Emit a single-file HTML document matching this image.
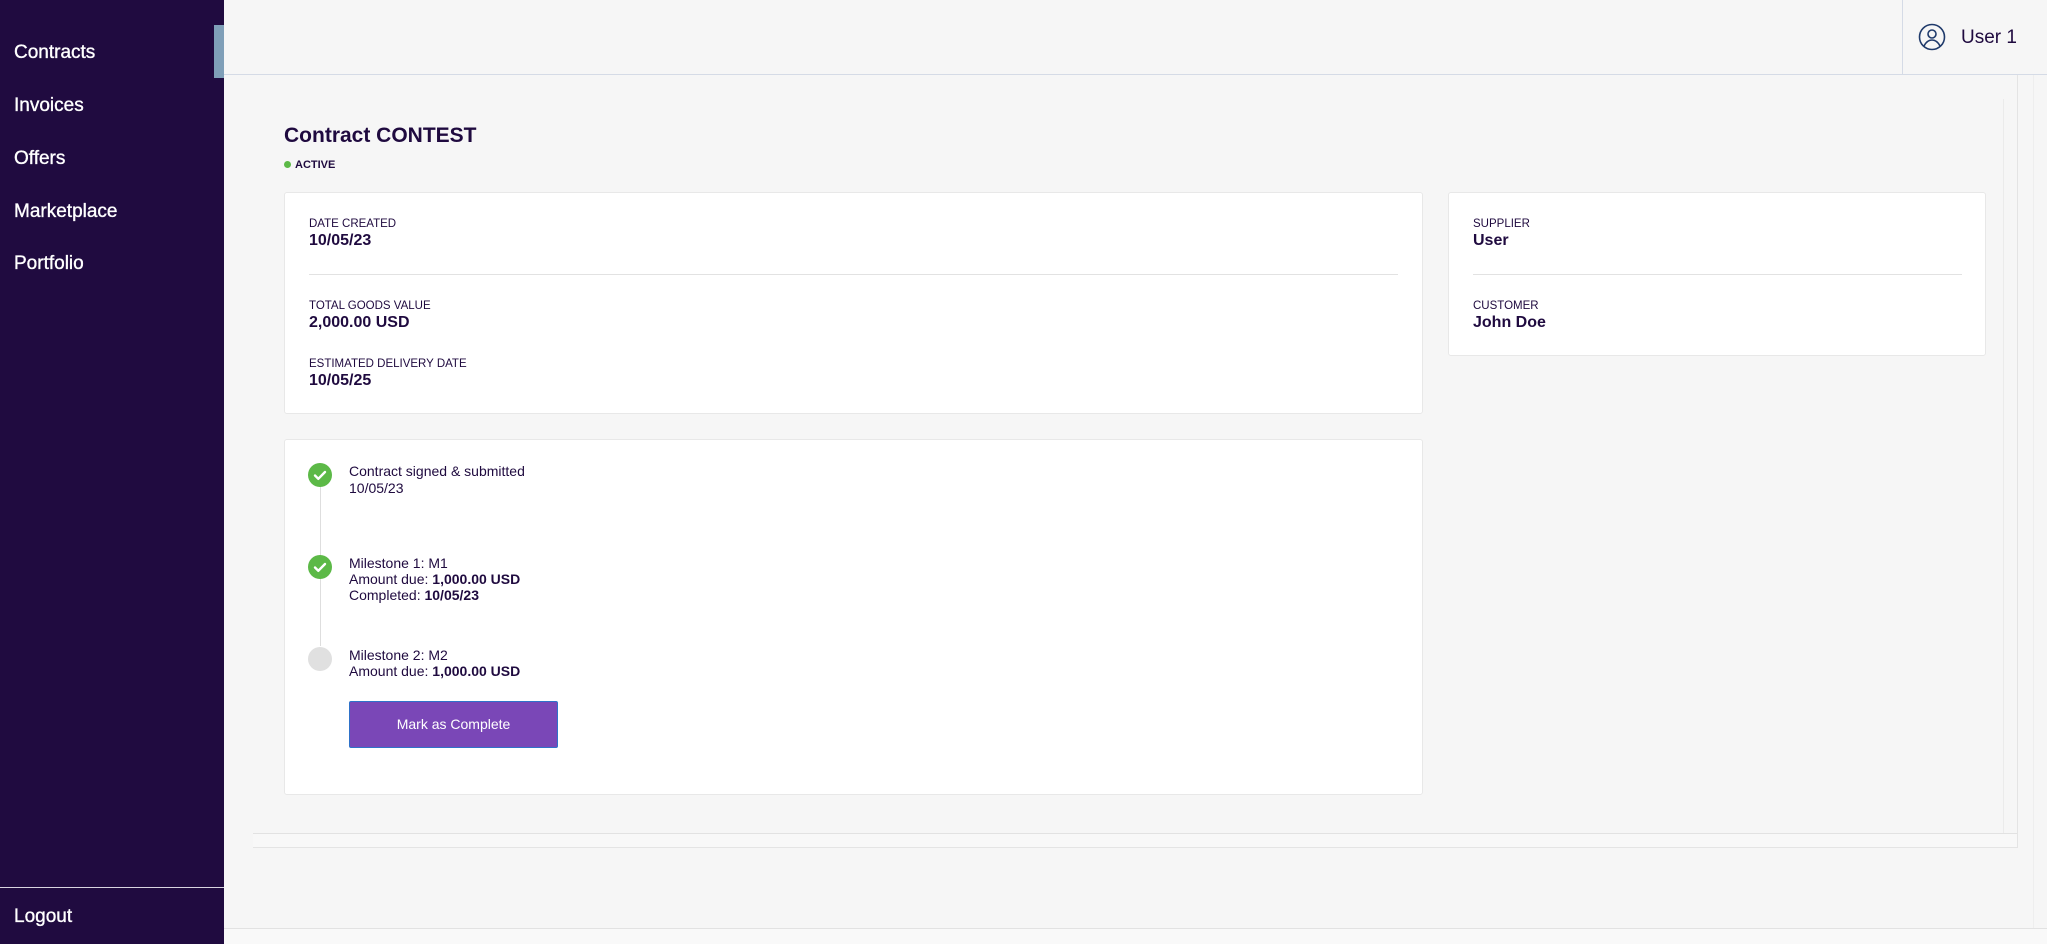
<!DOCTYPE html>
<html><head><meta charset="utf-8"><style>
*{box-sizing:border-box;margin:0;padding:0}
body{width:2047px;height:944px;overflow:hidden;background:#f6f6f6;font-family:"Liberation Sans",sans-serif;color:#1f0a3f;position:relative}
.a{position:absolute}
.side{left:0;top:0;width:224px;height:944px;background:#200b40}
.nav{position:absolute;left:14px;color:#fff;font-size:19px;line-height:24px;-webkit-text-stroke:0.35px #fff}
.card{position:absolute;background:#fff;border:1px solid #e8e8e8;border-radius:3px}
.lbl{position:absolute;font-size:11.5px;line-height:14px;color:#1f0a3f}
.val{position:absolute;font-size:16px;font-weight:bold;line-height:18px}
.t{position:absolute;font-size:14px;line-height:17px;left:349px}
.hr{position:absolute;height:1px;background:#e2e2e2}
.chk{position:absolute;width:24px;height:24px;border-radius:50%;background:#5cb947;left:308px}
</style></head><body>
<div class="a side"></div>
<div class="a" style="left:214px;top:25px;width:10px;height:53px;background:#7f9fb8"></div>
<div class="nav" style="top:41px">Contracts</div>
<div class="nav" style="top:94px">Invoices</div>
<div class="nav" style="top:147px">Offers</div>
<div class="nav" style="top:200px">Marketplace</div>
<div class="nav" style="top:252px">Portfolio</div>
<div class="a" style="left:0;top:887px;width:224px;height:1px;background:#d8d4e0"></div>
<div class="nav" style="top:905px">Logout</div>

<div class="a" style="left:224px;top:0;width:1823px;height:75px;background:#f6f6f6;border-bottom:1px solid #d5dbe6"></div>
<div class="a" style="left:1902px;top:0;width:1px;height:74px;background:#d5dbe6"></div>
<svg class="a" style="left:1918px;top:23px" width="28" height="28" viewBox="0 0 28 28" fill="none" stroke="#1f3a6b" stroke-width="1.6"><circle cx="14" cy="14" r="12.5"/><circle cx="14" cy="11" r="4"/><path d="M6 23c2-4 5-6 8-6s6 2 8 6"/></svg>
<div class="a" style="left:1961px;top:27px;font-size:19px;line-height:22px;color:#1f0a3f">User 1</div>

<div class="a" style="left:2003px;top:99px;width:1px;height:735px;background:#ebebeb"></div>
<div class="a" style="left:2017px;top:75px;width:1px;height:773px;background:#e4e4e4"></div>
<div class="a" style="left:253px;top:833px;width:1764px;height:1px;background:#e2e2e2"></div>
<div class="a" style="left:253px;top:834px;width:1764px;height:14px;background:#f8f8f8;border-bottom:1px solid #e4e4e4"></div>
<div class="a" style="left:2033px;top:75px;width:1px;height:855px;background:#eeeeee"></div>
<div class="a" style="left:224px;top:928px;width:1823px;height:16px;background:#f9f9f9;border-top:1px solid #e2e2e2"></div>

<div class="a" style="left:284px;top:124px;font-size:21px;font-weight:bold;line-height:24px">Contract CONTEST</div>
<div class="a" style="left:284px;top:161px;width:7px;height:7px;border-radius:50%;background:#5cb947"></div>
<div class="a" style="left:295px;top:159px;font-size:11px;font-weight:bold;line-height:13px">ACTIVE</div>

<div class="card" style="left:284px;top:192px;width:1139px;height:222px"></div>
<div class="lbl" style="left:309px;top:217px">DATE CREATED</div>
<div class="val" style="left:309px;top:232px">10/05/23</div>
<div class="hr" style="left:309px;top:274px;width:1089px"></div>
<div class="lbl" style="left:309px;top:299px">TOTAL GOODS VALUE</div>
<div class="val" style="left:309px;top:314px">2,000.00 USD</div>
<div class="lbl" style="left:309px;top:357px">ESTIMATED DELIVERY DATE</div>
<div class="val" style="left:309px;top:372px">10/05/25</div>

<div class="card" style="left:1448px;top:192px;width:538px;height:164px"></div>
<div class="lbl" style="left:1473px;top:217px">SUPPLIER</div>
<div class="val" style="left:1473px;top:232px">User</div>
<div class="hr" style="left:1473px;top:274px;width:489px"></div>
<div class="lbl" style="left:1473px;top:299px">CUSTOMER</div>
<div class="val" style="left:1473px;top:314px">John Doe</div>

<div class="card" style="left:284px;top:439px;width:1139px;height:356px"></div>
<div class="a" style="left:320px;top:486px;width:1px;height:160px;background:#dedede"></div>
<div class="chk" style="top:463px"><svg width="24" height="24" viewBox="0 0 24 24"><path d="M7 12.5l3.3 3.3L17 9" fill="none" stroke="#fff" stroke-width="2.4" stroke-linecap="round" stroke-linejoin="round"/></svg></div>
<div class="chk" style="top:555px"><svg width="24" height="24" viewBox="0 0 24 24"><path d="M7 12.5l3.3 3.3L17 9" fill="none" stroke="#fff" stroke-width="2.4" stroke-linecap="round" stroke-linejoin="round"/></svg></div>
<div class="chk" style="top:647px;background:#e0e0e0"></div>
<div class="t" style="top:463px">Contract signed &amp; submitted</div>
<div class="t" style="top:480px">10/05/23</div>
<div class="t" style="top:555px">Milestone 1: M1</div>
<div class="t" style="top:571px">Amount due: <b>1,000.00 USD</b></div>
<div class="t" style="top:587px">Completed: <b>10/05/23</b></div>
<div class="t" style="top:647px">Milestone 2: M2</div>
<div class="t" style="top:663px">Amount due: <b>1,000.00 USD</b></div>
<div class="a" style="left:349px;top:701px;width:209px;height:47px;background:#7a47b7;border:1px solid #2f72c9;border-radius:2px;color:#fff;font-size:14px;line-height:45px;text-align:center">Mark as Complete</div>
</body></html>
